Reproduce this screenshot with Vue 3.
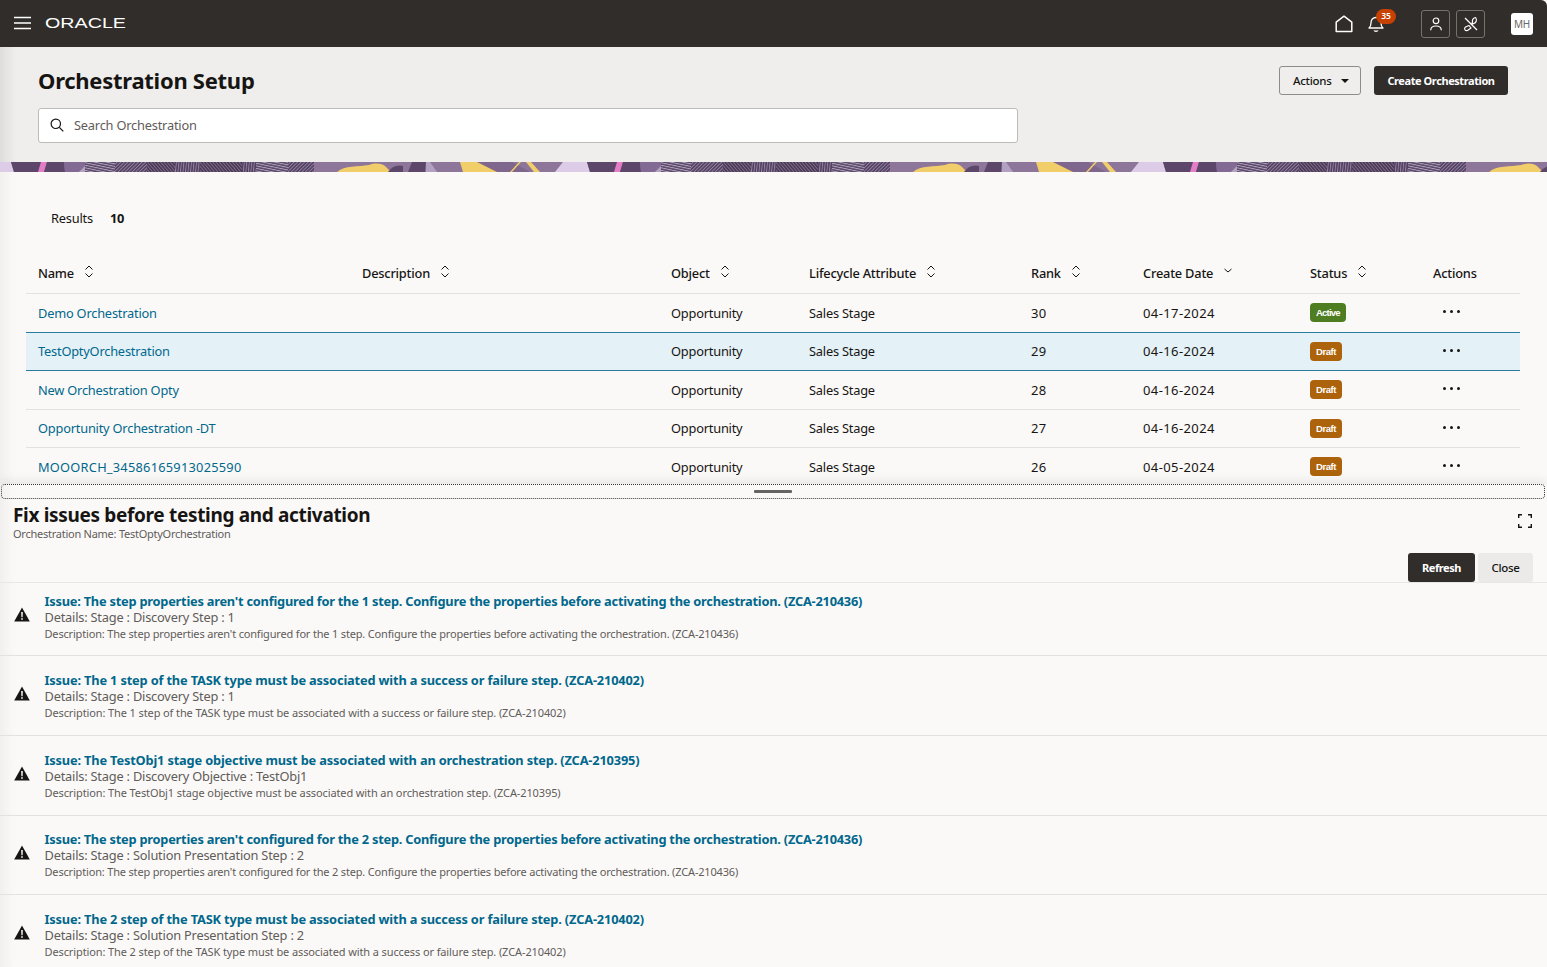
<script setup>
const columns = [
  { label: 'Name', sort: 'both' },
  { label: 'Description', sort: 'both' },
  { label: 'Object', sort: 'both' },
  { label: 'Lifecycle Attribute', sort: 'both' },
  { label: 'Rank', sort: 'both' },
  { label: 'Create Date', sort: 'down' },
  { label: 'Status', sort: 'both' },
  { label: 'Actions', sort: 'none' }
]

const rows = [
  { name: 'Demo Orchestration', rank: 30, date: '04-17-2024', status: 'Active' },
  { name: 'TestOptyOrchestration', rank: 29, date: '04-16-2024', status: 'Draft', selected: true },
  { name: 'New Orchestration Opty', rank: 28, date: '04-16-2024', status: 'Draft' },
  { name: 'Opportunity Orchestration -DT', rank: 27, date: '04-16-2024', status: 'Draft' },
  { name: 'MOOORCH_34586165913025590', rank: 26, date: '04-05-2024', status: 'Draft', numeric: true }
]

const issues = [
  {
    text: "The step properties aren't configured for the 1 step. Configure the properties before activating the orchestration. (ZCA-210436)",
    details: 'Stage : Discovery Step : 1'
  },
  {
    text: 'The 1 step of the TASK type must be associated with a success or failure step. (ZCA-210402)',
    details: 'Stage : Discovery Step : 1',
    short: true
  },
  {
    text: 'The TestObj1 stage objective must be associated with an orchestration step. (ZCA-210395)',
    details: 'Stage : Discovery Objective : TestObj1',
    short: true
  },
  {
    text: "The step properties aren't configured for the 2 step. Configure the properties before activating the orchestration. (ZCA-210436)",
    details: 'Stage : Solution Presentation Step : 2'
  },
  {
    text: 'The 2 step of the TASK type must be associated with a success or failure step. (ZCA-210402)',
    details: 'Stage : Solution Presentation Step : 2',
    short: true
  }
]

const tiles = [-576, 0, 576, 1152]
</script>

<template>
  <div class="app">
    <header class="topbar">
      <svg class="burger" width="18" height="14" viewBox="0 0 18 14">
        <path d="M0 1.5h17M0 7h17M0 12.5h17" stroke="#fff" stroke-width="1.5" fill="none" />
      </svg>
      <svg class="logo" width="90" height="20" viewBox="0 0 90 20">
        <text x="0" y="15" textLength="81" lengthAdjust="spacingAndGlyphs">ORACLE</text>
      </svg>
      <div class="top-right">
        <svg class="home" width="18" height="18" viewBox="0 0 18 18">
          <path d="M1.2 16.4V7.2L9 1.2l7.8 6v9.2z" fill="none" stroke="#fff" stroke-width="1.5" stroke-linejoin="round" />
        </svg>
        <div class="bell-wrap">
          <svg width="16" height="18" viewBox="0 0 16 18">
            <path d="M1 13c1.5-1.3 2-2.5 2-5 0-3.3 1.800-5.500 5-5.500s5 2.200 5 5.500c0 2.500.5 3.700 2 5z" fill="none" stroke="#fff" stroke-width="1.300" stroke-linejoin="round" />
            <path d="M6 15.500c.5 1 3.500 1 4 0" fill="none" stroke="#fff" stroke-width="1.300" />
          </svg>
          <span class="count">35</span>
        </div>
        <button class="icon-btn person">
          <svg width="16" height="16" viewBox="0 0 16 16">
            <circle cx="8" cy="4.800" r="2.800" fill="none" stroke="#fff" stroke-width="1.200" />
            <path d="M2.800 13.800c0-1 .3-2 1.200-2.700 1-.8 2.400-1.100 4-1.100s3 .3 4 1.100c.9.7 1.200 1.700 1.200 2.700" fill="none" stroke="#fff" stroke-width="1.200" stroke-linecap="round" />
          </svg>
        </button>
        <button class="icon-btn">
          <svg width="16" height="16" viewBox="0 0 16 16">
            <path d="M2 2l12 12" stroke="#fff" stroke-width="1.200" fill="none" />
            <path d="M8.500 8.500l1-2.500c-.4-2 .5-3.800 3-4.500.8 1 1.200 2.500.8 3.500-.4 1.300-1.500 2.300-2.800 2.600z" fill="none" stroke="#fff" stroke-width="1.200" stroke-linejoin="round" />
            <path d="M6 9.500l-3 1.200c-1.400.7-1.700 2-1 3.100.8 1 2.200 1 3.200.2L8 12z" fill="none" stroke="#fff" stroke-width="1.200" stroke-linejoin="round" />
          </svg>
        </button>
        <div class="avatar">MH</div>
      </div>
    </header>

    <section class="page-head">
      <div class="title-row">
        <h1>Orchestration Setup</h1>
        <div class="head-actions">
          <button class="btn outline">
            Actions
            <svg width="8" height="4" viewBox="0 0 8 4"><path d="M0 0h8L4 4z" fill="#161513" /></svg>
          </button>
          <button class="btn dark create">Create Orchestration</button>
        </div>
      </div>
      <div class="search">
        <svg width="14" height="14" viewBox="0 0 14 14">
          <circle cx="5.800" cy="5.800" r="4.700" fill="none" stroke="#161513" stroke-width="1.200" />
          <path d="M9.300 9.300l4 4" stroke="#161513" stroke-width="1.200" fill="none" />
        </svg>
        <span>Search Orchestration</span>
      </div>
    </section>

    <svg class="banner" width="1547" height="10">
      <defs>
        <pattern id="hatchDiag" width="2.500" height="2.500" patternUnits="userSpaceOnUse" patternTransform="rotate(45)">
          <rect width="2.500" height="2.500" fill="#4e3d5c" /><rect width="1" height="2.500" fill="#9482a3" />
        </pattern>
        <pattern id="hatchFlat" width="3" height="2.500" patternUnits="userSpaceOnUse" patternTransform="rotate(12)">
          <rect width="3" height="2.500" fill="#574565" /><rect width="3" height="1" fill="#b3a4bf" />
        </pattern>
        <pattern id="hatchVert" width="2.500" height="3" patternUnits="userSpaceOnUse" patternTransform="rotate(6)">
          <rect width="2.500" height="3" fill="#4e3d5c" /><rect width="1" height="3" fill="#9482a3" />
        </pattern>
        <pattern id="hatchBack" width="2.500" height="2.500" patternUnits="userSpaceOnUse" patternTransform="rotate(-40)">
          <rect width="2.500" height="2.500" fill="#45354f" /><rect width="1" height="2.500" fill="#806e8f" />
        </pattern>
        <g id="tile">
          <rect x="85" y="0" width="30" height="10" fill="url(#hatchFlat)" />
          <rect x="115" y="0" width="32" height="10" fill="url(#hatchDiag)" />
          <rect x="147" y="0" width="28" height="10" fill="url(#hatchBack)" />
          <rect x="175" y="0" width="25" height="10" fill="url(#hatchVert)" />
          <rect x="200" y="0" width="42" height="10" fill="url(#hatchBack)" />
          <rect x="242" y="0" width="14" height="10" fill="url(#hatchVert)" />
          <rect x="256" y="0" width="32" height="10" fill="url(#hatchFlat)" />
          <rect x="288" y="0" width="26" height="10" fill="url(#hatchDiag)" />
          <rect x="314" y="0" width="347" height="10" fill="#8d7699" />
          <polygon points="470,0 512,0 530,10 492,10" fill="#7e668c" />
          <path d="M337 10C345 3 358 5 369 3c6-2 11-2 16 1l6 6z" fill="#f2ce6b" />
          <path d="M388 10q6-8 15-6v6z" fill="#5c476b" />
          <polygon points="412,0 426,0 425,10 408,10" fill="#5c476b" />
          <polygon points="426,0 430,0 437,10 426,10" fill="#b3a1c2" />
          <polygon points="460,0 477,0 497,10 463,10" fill="#f2ce6b" />
          <polygon points="519,0 521,0 512,10 510,10" fill="#f2ce6b" />
          <polygon points="526,0 531,0 540,10 534,10" fill="#f2ce6b" />
          <polygon points="563,0 587,0 590,10 555,10" fill="#ddcce7" />
          <polygon points="587,0 618,0 615,10 590,10" fill="#5c476b" />
          <polygon points="617,0 623,0 620,10 614,10" fill="#e57cc6" />
          <polygon points="623,0 640,0 641,10 620,10" fill="#5c476b" />
          <polygon points="640,0 661,0 661,4 655,10 641,10" fill="#836a94" />
          <polygon points="661,4 661,10 655,10" fill="#b3a1c2" />
        </g>
      </defs>
      <use v-for="t in tiles" :key="t" href="#tile" :x="t" y="0" />
    </svg>

    <main class="main">
      <div class="results"><span>Results</span><strong>10</strong></div>
      <div class="grid-row head">
        <div v-for="c in columns" :key="c.label" class="cell">
          <span>{{ c.label }}</span>
          <svg v-if="c.sort === 'both'" class="sort" width="10" height="13" viewBox="0 0 10 13">
            <path d="M1.500 4.500L5 1l3.500 3.500M1.500 8.500L5 12l3.500-3.500" fill="none" stroke="#161513" stroke-width="1" />
          </svg>
          <svg v-else-if="c.sort === 'down'" class="sort" width="10" height="13" viewBox="0 0 10 13">
            <path d="M1.500 4L5 7l3.500-3" fill="none" stroke="#161513" stroke-width="1" />
          </svg>
        </div>
      </div>
      <div v-for="r in rows" :key="r.name" class="grid-row body" :class="{ selected: r.selected }">
        <div class="cell"><a class="link" :class="{ numeric: r.numeric }">{{ r.name }}</a></div>
        <div class="cell"></div>
        <div class="cell">Opportunity</div>
        <div class="cell">Sales Stage</div>
        <div class="cell num">{{ r.rank }}</div>
        <div class="cell num">{{ r.date }}</div>
        <div class="cell"><span class="badge" :class="r.status.toLowerCase()">{{ r.status }}</span></div>
        <div class="cell"><span class="dots"><i></i><i></i><i></i></span></div>
      </div>
    </main>

    <section class="drawer">
      <div class="splitter"><span class="grip"></span></div>
      <div class="drawer-head">
        <div>
          <h2>Fix issues before testing and activation</h2>
          <p>Orchestration Name: TestOptyOrchestration</p>
        </div>
        <svg class="expand" width="14" height="14" viewBox="0 0 14 14">
          <path d="M.7 4V.7H4M10 .7h3.300V4M13.300 10v3.300H10M4 13.300H.7V10" fill="none" stroke="#161513" stroke-width="1.400" />
        </svg>
      </div>
      <div class="drawer-actions">
        <button class="btn dark refresh">Refresh</button>
        <button class="btn soft">Close</button>
      </div>
      <ul class="issues">
        <li v-for="(it, i) in issues" :key="i" class="issue" :class="{ short: it.short }">
          <svg class="warn" width="16" height="15" viewBox="0 0 16 15">
            <path d="M8 .5L15.800 14.500H.2z" fill="#161513" />
            <path d="M7.200 5h1.600l-.2 5.200H7.400zM7.200 11.200h1.600v1.600H7.200z" fill="#fff" />
          </svg>
          <div class="issue-text">
            <a class="issue-title">Issue: {{ it.text }}</a>
            <div class="issue-details">Details: {{ it.details }}</div>
            <div class="issue-desc">Description: {{ it.text }}</div>
          </div>
        </li>
      </ul>
    </section>
  </div>
</template>

<style>
html, body { margin: 0; padding: 0; background: #fbf9f8; }
</style>

<style scoped>
.app {
  width: 1547px;
  height: 967px;
  overflow: hidden;
  display: flex;
  flex-direction: column;
  font-family: "Noto Sans", sans-serif;
  color: #161513;
  background: #fbf9f8;
  font-size: 12.800px;
  letter-spacing: -0.2px;
}
.topbar {
  flex: none;
  height: 47px;
  background: #312d2a;
  display: flex;
  align-items: center;
  padding: 0 14px;
  box-sizing: border-box;
  border-top-right-radius: 6px;
}
.burger { margin-right: 13px; margin-top: -1px; }
.logo { margin-top: -1px; }
.logo text {
  font-family: "Liberation Sans", sans-serif;
  font-size: 15.500px;
  letter-spacing: 0;
  fill: #fff;
}
.top-right { margin-left: auto; display: flex; align-items: center; }
.home { margin-right: 15px; }
.bell-wrap { position: relative; display: flex; margin-right: 37px; }
.count {
  position: absolute;
  left: 8px;
  top: -6px;
  width: 20px;
  height: 15px;
  border-radius: 8px;
  background: #c74100;
  color: #fff;
  font-size: 8.500px;
  font-weight: 600;
  line-height: 14px;
  letter-spacing: 0;
  text-align: center;
}
.icon-btn {
  width: 29px;
  height: 28px;
  padding: 0;
  display: flex;
  align-items: center;
  justify-content: center;
  background: transparent;
  border: 1px solid #75716d;
  border-radius: 3px;
}
.icon-btn.person { margin-right: 6px; }
.avatar {
  width: 22px;
  height: 22px;
  margin-left: 26px;
  background: #fff;
  border-radius: 3px;
  color: #6b6966;
  font-size: 10px;
  line-height: 22px;
  text-align: center;
}
.page-head {
  flex: none;
  height: 115px;
  box-sizing: border-box;
  padding: 19px 39px 0 38px;
  background: linear-gradient(90deg, #dedddb, #efeeec 16px);
}
.title-row { display: flex; align-items: center; justify-content: space-between; height: 29px; }
h1 { margin: 0; font-size: 22px; line-height: 29px; font-weight: 700; letter-spacing: -0.27px; }
.head-actions { display: flex; gap: 13px; }
.btn {
  height: 29px;
  box-sizing: border-box;
  border-radius: 3px;
  font-family: inherit;
  font-size: 11.500px;
  letter-spacing: -0.3px;
  padding: 0;
  border: 1px solid transparent;
}
.btn.outline {
  width: 82px;
  display: flex;
  align-items: center;
  gap: 10px;
  padding-left: 13px;
  background: transparent;
  border-color: #8f8c88;
  color: #161513;
  font-weight: 500;
}
.btn.dark { background: #312d2a; color: #fff; font-weight: 700; font-size: 11px; letter-spacing: -0.42px; }
.btn.create { width: 134px; }
.btn.refresh { width: 67px; }
.btn.soft { width: 55px; background: #ebeae8; color: #161513; font-weight: 500; }
.search {
  margin-top: 13px;
  width: 980px;
  height: 35px;
  box-sizing: border-box;
  display: flex;
  align-items: center;
  gap: 10px;
  padding: 0 0 1px 11px;
  background: #fff;
  border: 1px solid #bdbbb8;
  border-radius: 3px;
  color: #5f5c59;
}
.banner { flex: none; display: block; }
.main {
  flex: none;
  height: 312px;
  box-sizing: border-box;
  padding: 38px 27px 0 26px;
  overflow: hidden;
  background: linear-gradient(90deg, #f1f0ee, #fbf9f8 14px);
}
.results {
  display: flex;
  gap: 17px;
  padding-left: 25px;
  line-height: 16px;
  margin-bottom: 27px;
}
.results strong { font-weight: 700; }
.grid-row {
  display: grid;
  grid-template-columns: 324px 309px 138px 222px 112px 167px 123px 1fr;
  padding-left: 12px;
  align-items: center;
  box-sizing: border-box;
  border-bottom: 1px solid #e4e2e0;
}
.grid-row.head { height: 41.200px; font-weight: 500; }
.grid-row.body { height: 38.500px; }
.grid-row.selected {
  background: #e4f1f7;
  border-bottom-color: #2d7a9f;
  box-shadow: 0 -1px 0 #2d7a9f;
}
.cell { display: flex; align-items: center; }
.cell.num { font-size: 13px; letter-spacing: 0.4px; }
.sort { margin-left: 10px; margin-top: -3px; }
.link { color: #00688c; }
.link.numeric { letter-spacing: 0.25px; }
.badge {
  height: 19px;
  padding: 0 6px;
  border-radius: 4px;
  color: #fff;
  font-family: "Liberation Sans", sans-serif;
  font-weight: 700;
  font-size: 9.500px;
  letter-spacing: -0.45px;
  line-height: 19px;
}
.badge.active { background: #4f7d21; letter-spacing: -0.8px; }
.badge.draft { background: #ac630c; }
.dots { display: flex; gap: 4px; margin-left: 9.500px; margin-top: -2px; }
.dots i { width: 3px; height: 3px; border-radius: 50%; background: #161513; }
.drawer {
  flex: 1;
  min-height: 0;
  position: relative;
  z-index: 1;
  background: linear-gradient(90deg, #f1f0ee, #fbf9f8 14px);
  box-shadow: 0 -3px 10px rgba(0, 0, 0, 0.08);
}
.splitter {
  height: 13px;
  margin: 0 2px 0 1px;
  border: 1px dotted #3a3836;
  border-radius: 4px;
  display: flex;
  align-items: center;
  justify-content: center;
}
.grip { width: 38px; height: 3px; background: #666461; border-radius: 1px; }
.drawer-head {
  display: flex;
  justify-content: space-between;
  align-items: flex-start;
  padding: 4px 15px 0 13px;
}
h2 { margin: 0; font-size: 19px; line-height: 25px; font-weight: 700; letter-spacing: -0.33px; }
.drawer-head p { margin: -1px 0 0; font-size: 11px; line-height: 13px; letter-spacing: -0.25px; color: #5f5c59; }
.expand { margin-top: 11px; }
.drawer-actions {
  display: flex;
  justify-content: flex-end;
  gap: 3px;
  padding-right: 14px;
  margin-top: 13px;
}
.issues { list-style: none; margin: 0; padding: 0; border-top: 1px solid #e9e7e5; }
.issue {
  display: flex;
  align-items: center;
  gap: 14.500px;
  padding: 16px 0 14px 14px;
  box-sizing: border-box;
  height: 79.700px;
  border-bottom: 1px solid #e4e2e0;
}
.issue:first-child { padding-top: 10px; height: 73.200px; }
.warn { flex: none; margin-top: -6px; }
.issue-text { min-width: 0; }
.issue-title { display: block; color: #00688c; font-weight: 700; line-height: 16px; letter-spacing: -0.22px; }
.issue-details { color: #5f5c59; line-height: 16px; }
.issue-desc { color: #5f5c59; font-size: 11px; line-height: 17px; letter-spacing: -0.175px; }
.issue.short .issue-title { letter-spacing: -0.16px; }
.issue.short .issue-desc { letter-spacing: -0.11px; }
</style>
